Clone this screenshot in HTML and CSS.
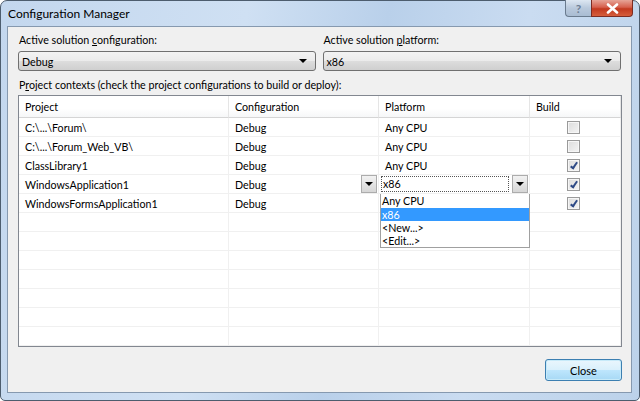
FILE: index.html
```html
<!DOCTYPE html>
<html lang="en">
<head>
    <meta charset="UTF-8">
    <title>Configuration Manager</title>
    <link rel="stylesheet" href="styles.css">
</head>
<body>
    <!-- dialog window -->
    <div class="window">
        <!-- title bar -->
        <div class="titlebar">
            <span class="title">Configuration Manager</span>
            <div class="caption-buttons">
                <div class="cap-btn cap-help">?</div>
                <div class="cap-btn cap-close">
                    <svg width="13" height="11" viewBox="0 0 13 11"><path d="M2 1.5 L11 9.5 M11 1.5 L2 9.5" stroke="#fff" stroke-width="2.6" stroke-linecap="round"/></svg>
                </div>
            </div>
        </div>

        <!-- client area -->
        <div class="client">
            <div class="solution-row">
                <div class="field">
                    <label>Active solution <u>c</u>onfiguration:</label>
                    <div class="combo"><span>Debug</span><i class="arrow"></i></div>
                </div>
                <div class="field">
                    <label>Active solution <u>p</u>latform:</label>
                    <div class="combo"><span>x86</span><i class="arrow"></i></div>
                </div>
            </div>

            <label class="contexts-label">P<u>r</u>oject contexts (check the project configurations to build or deploy):</label>

            <div class="grid-wrap">
                <div class="grid">
                    <div class="head">Project</div>
                    <div class="head">Configuration</div>
                    <div class="head">Platform</div>
                    <div class="head">Build</div>

                    <div class="cell">C:\...\Forum\</div>
                    <div class="cell">Debug</div>
                    <div class="cell">Any CPU</div>
                    <div class="cell check-cell"><span class="check"></span></div>

                    <div class="cell">C:\...\Forum_Web_VB\</div>
                    <div class="cell">Debug</div>
                    <div class="cell">Any CPU</div>
                    <div class="cell check-cell"><span class="check"></span></div>

                    <div class="cell">ClassLibrary1</div>
                    <div class="cell">Debug</div>
                    <div class="cell">Any CPU</div>
                    <div class="cell check-cell"><span class="check checked"></span></div>

                    <div class="cell">WindowsApplication1</div>
                    <div class="cell edit-cell">
                        <span class="edit-text">Debug</span>
                        <span class="mini-btn"><i class="arrow"></i></span>
                    </div>
                    <div class="cell edit-cell">
                        <span class="edit-box">x86</span>
                        <span class="mini-btn"><i class="arrow"></i></span>
                    </div>
                    <div class="cell check-cell"><span class="check checked"></span></div>

                    <div class="cell">WindowsFormsApplication1</div>
                    <div class="cell">Debug</div>
                    <div class="cell"></div>
                    <div class="cell check-cell"><span class="check checked"></span></div>

                    <div class="cell"></div><div class="cell"></div><div class="cell"></div><div class="cell"></div>
                    <div class="cell"></div><div class="cell"></div><div class="cell"></div><div class="cell"></div>
                    <div class="cell"></div><div class="cell"></div><div class="cell"></div><div class="cell"></div>
                    <div class="cell"></div><div class="cell"></div><div class="cell"></div><div class="cell"></div>
                    <div class="cell"></div><div class="cell"></div><div class="cell"></div><div class="cell"></div>
                    <div class="cell"></div><div class="cell"></div><div class="cell"></div><div class="cell"></div>
                    <div class="cell"></div><div class="cell"></div><div class="cell"></div><div class="cell"></div>
                </div>

                <!-- open platform dropdown -->
                <ul class="dropdown">
                    <li>Any CPU</li>
                    <li class="selected">x86</li>
                    <li>&lt;New...&gt;</li>
                    <li>&lt;Edit...&gt;</li>
                </ul>
            </div>

            <div class="footer">
                <button class="close-btn">Close</button>
            </div>
        </div>
    </div>
</body>
</html>
```

FILE: styles.css
```css
/* page */
body {
    margin: 0;
    width: 640px;
    height: 401px;
    background: #ffffff;
    font-family: Lato, "Liberation Sans", sans-serif;
    font-size: 10.7px;
    color: #000;
    overflow: hidden;
}

/* window frame */
.window {
    box-sizing: border-box;
    width: 640px;
    height: 401px;
    border: 1px solid #4d5d6e;
    border-radius: 7px 7px 5px 5px;
    background: linear-gradient(100deg, #c3d7ee 0%, #cfe0f3 35%, #b9d0ea 55%, #cadcf1 75%, #bcd2ea 100%);
    padding: 0 7px 7px 6px;
    display: flex;
    flex-direction: column;
}

.titlebar {
    height: 25px;
    display: flex;
    justify-content: space-between;
    align-items: flex-start;
}

.title {
    font-size: 12px;
    margin: 5px 0 0 1px;
    color: #000;
}

.caption-buttons {
    display: flex;
    margin-top: -1px;
    margin-right: -1px;
}

.cap-btn {
    height: 17px;
    box-sizing: border-box;
    border: 1px solid #6a7b8e;
    border-top: none;
    display: flex;
    justify-content: center;
    align-items: center;
}

.cap-help {
    width: 26px;
    border-radius: 0 0 0 4px;
    border-right: none;
    background: linear-gradient(#dde7f2, #b9c9dc 50%, #a9bcd2);
    color: #6d7f95;
    font-weight: bold;
    font-size: 12px;
}

.cap-close {
    width: 42px;
    border-radius: 0 0 4px 0;
    border-color: #7c2c22;
    background: linear-gradient(#e6a497, #d6604d 45%, #c2391f 55%, #d55e3c);
}

/* client area */
.client {
    flex: 1;
    border: 1px solid #8699af;
    background: #f0f0f0;
    padding: 5px 10px 0 10px;
    display: flex;
    flex-direction: column;
}

.solution-row {
    display: flex;
    gap: 7px;
}

.field {
    display: flex;
    flex-direction: column;
}

.field:first-child {
    width: 298px;
}

.field:last-child {
    width: 299px;
}

label {
    display: block;
    height: 16px;
    line-height: 16px;
    padding-left: 1px;
}

.combo {
    box-sizing: border-box;
    height: 20px;
    margin-top: 3px;
    border: 1px solid #707070;
    border-radius: 3px;
    background: linear-gradient(#f3f3f3, #ebebeb 50%, #dddddd 51%, #cfcfcf);
    display: flex;
    align-items: center;
    justify-content: space-between;
    padding: 0 8px 0 3px;
}

.arrow {
    width: 0;
    height: 0;
    border-left: 4px solid transparent;
    border-right: 4px solid transparent;
    border-top: 4px solid #000;
}

.contexts-label {
    margin-top: 6px;
}

/* project grid */
.grid-wrap {
    position: relative;
    margin-top: 2px;
    width: 604px;
}

.grid {
    box-sizing: border-box;
    border: 1px solid #828790;
    background: #fff;
    display: grid;
    grid-template-columns: 210px 150px 151px 91px;
    grid-template-rows: 22px repeat(12, 19px);
}

.head {
    border-right: 1px solid #e5e5e5;
    border-bottom: 1px solid #d5d5d5;
    background: linear-gradient(#ffffff, #ffffff 60%, #f6f7f8);
    display: flex;
    align-items: center;
    padding-left: 6px;
}

.cell {
    box-sizing: border-box;
    border-right: 1px solid #f0f0f0;
    border-bottom: 1px solid #f0f0f0;
    display: flex;
    align-items: center;
    padding-left: 6px;
    white-space: nowrap;
}

.check-cell {
    justify-content: flex-start;
    padding-left: 37px;
}

.check {
    box-sizing: border-box;
    width: 13px;
    height: 13px;
    border: 1px solid #9a9a9a;
    background: linear-gradient(135deg, #dcdcdc, #f4f4f4);
    box-shadow: inset 0 0 0 1px #f6f6f6;
    position: relative;
}

.check.checked::after {
    content: "";
    position: absolute;
    left: 4px;
    top: 1px;
    width: 2px;
    height: 6px;
    border: solid #2e4a86;
    border-width: 0 2px 2px 0;
    transform: rotate(35deg);
}

.edit-cell {
    padding-left: 0;
    justify-content: space-between;
}

.edit-cell .edit-text {
    padding-left: 6px;
}

.mini-btn {
    box-sizing: border-box;
    width: 16px;
    height: 18px;
    margin-right: 1px;
    border: 1px solid #acacac;
    background: linear-gradient(#f2f2f2, #e4e4e4 50%, #d6d6d6);
    display: flex;
    justify-content: center;
    align-items: center;
}

.edit-box {
    box-sizing: border-box;
    margin-left: 2px;
    width: 128px;
    height: 16px;
    border: 1px dotted #555;
    background: #fff;
    padding-left: 1px;
    line-height: 14px;
}

/* dropdown list */
.dropdown {
    position: absolute;
    left: 362px;
    top: 99px;
    width: 150px;
    box-sizing: border-box;
    margin: 0;
    padding: 0;
    list-style: none;
    background: #fff;
    border: 1px solid #a0a0a0;
    border-top: none;
}

.dropdown li {
    height: 13px;
    line-height: 13px;
    padding-left: 1px;
}

.dropdown li:first-child {
    height: 14px;
}

.dropdown li.selected {
    background: #3399ff;
    color: #fff;
}

/* footer */
.footer {
    display: flex;
    justify-content: flex-end;
    width: 604px;
    margin-top: 12px;
}

.close-btn {
    width: 77px;
    height: 22px;
    border: 1px solid #3c7fb1;
    border-radius: 3px;
    background: linear-gradient(#eaf6fd, #d9f0fc 50%, #bee6fd 51%, #a7d9f5);
    box-shadow: inset 0 0 0 1px #c7eaf9;
    font-family: Lato, "Liberation Sans", sans-serif;
    font-size: 11px;
    color: #000;
    padding: 0;
}
```
